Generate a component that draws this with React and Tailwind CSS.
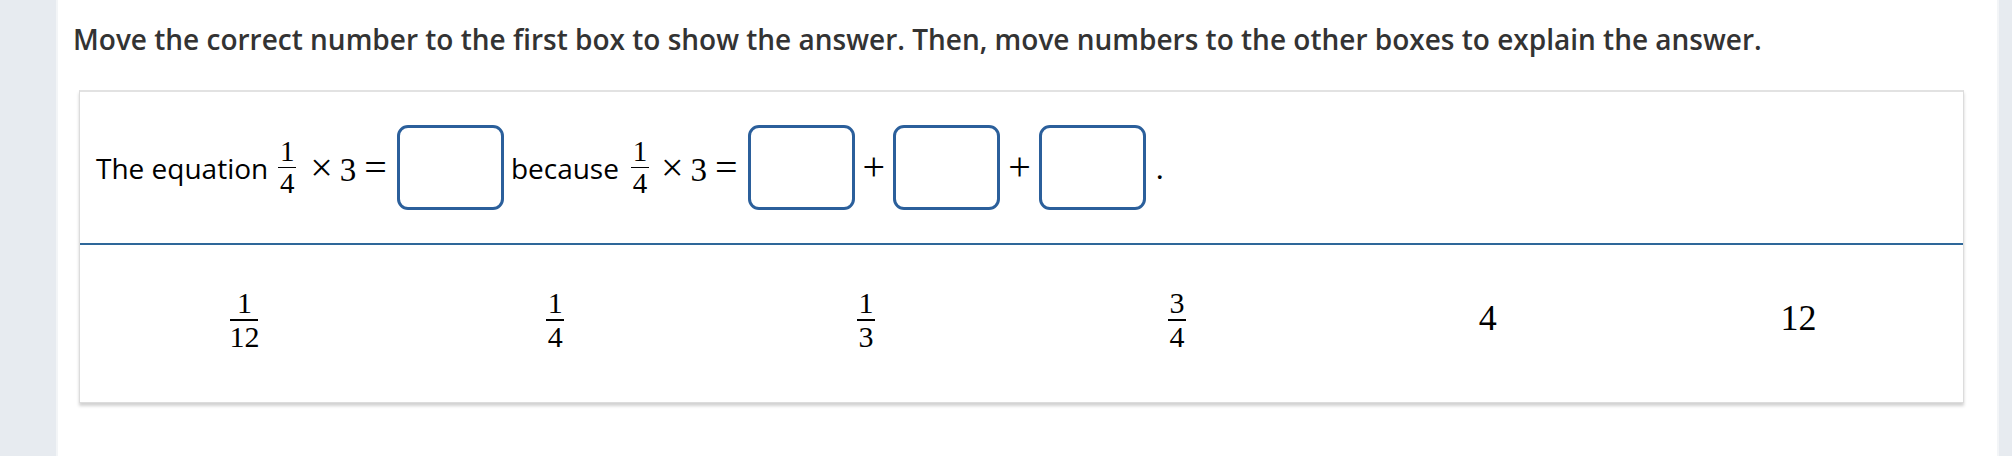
import React from "react";

const Frac = ({ n, d, cls = "", bar = "h-[2px]" }) => (
  <span className={"inline-flex flex-col items-center leading-none font-['Liberation_Serif','Times_New_Roman',serif] " + cls}>
    <span className="pb-[1px]">{n}</span>
    <span className={"w-full bg-black " + bar}></span>
    <span className="pt-[1px]">{d}</span>
  </span>
);

const Box = () => (
  <span className="inline-block shrink-0 w-[107px] h-[85px] rounded-[11px] border-[3px] border-[#2b5f9b] bg-white"></span>
);

const Times3 = () => (
  <span className="font-['Liberation_Serif','Times_New_Roman',serif] leading-none flex items-baseline">
    <span className="text-[40px]">×</span>
    <span className="text-[33px] ml-[7px]">3</span>
    <span className="text-[40px] ml-[8px] mr-[10px]">=</span>
  </span>
);

const Plus = () => (
  <span className="font-['Liberation_Serif','Times_New_Roman',serif] text-[40px] leading-none mx-[8px] pb-[2px]">+</span>
);

export default function App() {
  return (
    <div className="flex w-[2012px] h-[456px] bg-white overflow-hidden">
      <div className="w-[58px] shrink-0 bg-[#e7ebf0] border-r-2 border-[#f3f5f7]"></div>
      <div className="flex-1 flex flex-col pl-[13px] pr-[33px]">
        <div className="pl-[2px] pt-[21px] h-[90px] font-['Open_Sans',sans-serif] font-semibold text-[28px] leading-[36px] text-[#333] whitespace-nowrap">
          Move the correct number to the first box to show the answer. Then, move numbers to the other boxes to explain the answer.
        </div>
        <div className="ml-[8px] h-[313px] border border-[#dcdcdc] border-t-2 border-t-[#e2e2e2] bg-white shadow-[0_3px_3px_rgba(0,0,0,0.18)] flex flex-col">
          <div className="h-[151px] flex items-center pl-[16px] text-black">
            <span className="font-['Open_Sans',sans-serif] text-[28px] mr-[10px]">The equation</span>
            <Frac n="1" d="4" cls="text-[29px] w-[18px] mr-[14px]" bar="h-[1.5px]" />
            <Times3 />
            <Box />
            <span className="font-['Open_Sans',sans-serif] text-[28px] ml-[7px] mr-[12px]">because</span>
            <Frac n="1" d="4" cls="text-[29px] w-[18px] mr-[12px]" bar="h-[1.5px]" />
            <Times3 />
            <Box />
            <Plus />
            <Box />
            <Plus />
            <Box />
            <span className="font-['Liberation_Serif','Times_New_Roman',serif] text-[32px] leading-none ml-[10px]">.</span>
          </div>
          <div className="h-[2px] bg-[#2e6799]"></div>
          <div className="flex-1 grid grid-cols-6 px-[9px] pb-[8px] items-center text-black">
            <div className="flex justify-center"><Frac n="1" d="12" cls="text-[30px] w-[28px]" /></div>
            <div className="flex justify-center"><Frac n="1" d="4" cls="text-[30px] w-[18px]" /></div>
            <div className="flex justify-center"><Frac n="1" d="3" cls="text-[30px] w-[18px]" /></div>
            <div className="flex justify-center"><Frac n="3" d="4" cls="text-[30px] w-[18px]" /></div>
            <div className="flex justify-center font-['Liberation_Serif','Times_New_Roman',serif] text-[36px] leading-none pb-[4px]">4</div>
            <div className="flex justify-center font-['Liberation_Serif','Times_New_Roman',serif] text-[36px] leading-none pb-[4px]">12</div>
          </div>
        </div>
      </div>
      <div className="w-[15px] shrink-0 bg-[#e7ebf0] border-l-2 border-[#f3f5f7]"></div>
    </div>
  );
}
